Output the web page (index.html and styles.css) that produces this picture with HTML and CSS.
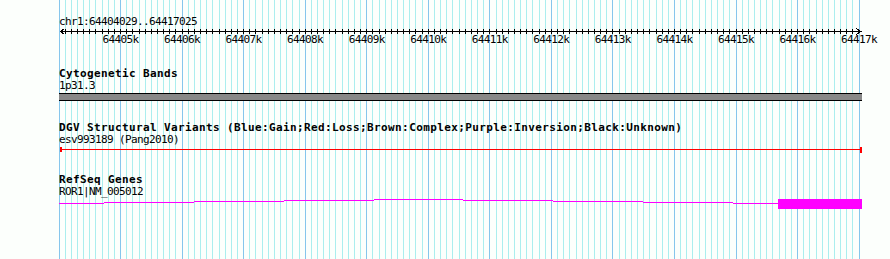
FILE: index.html
```html
<!DOCTYPE html>
<html>
<head>
<meta charset="utf-8">
<link rel="stylesheet" href="styles.css">
</head>
<body>
<div class="view">
  <svg class="grid" width="803" height="259" viewBox="0 0 803 259">
    <path class="grid-light" d="M6.5,0v259M12.5,0v259M18.5,0v259M24.5,0v259M30.5,0v259M36.5,0v259M43.5,0v259M49.5,0v259M55.5,0v259M67.5,0v259M73.5,0v259M80.5,0v259M86.5,0v259M92.5,0v259M98.5,0v259M104.5,0v259M110.5,0v259M116.5,0v259M129.5,0v259M135.5,0v259M141.5,0v259M147.5,0v259M153.5,0v259M160.5,0v259M166.5,0v259M172.5,0v259M178.5,0v259M190.5,0v259M196.5,0v259M203.5,0v259M209.5,0v259M215.5,0v259M221.5,0v259M227.5,0v259M233.5,0v259M240.5,0v259M252.5,0v259M258.5,0v259M264.5,0v259M270.5,0v259M276.5,0v259M283.5,0v259M289.5,0v259M295.5,0v259M301.5,0v259M313.5,0v259M320.5,0v259M326.5,0v259M332.5,0v259M338.5,0v259M344.5,0v259M350.5,0v259M356.5,0v259M363.5,0v259M375.5,0v259M381.5,0v259M387.5,0v259M393.5,0v259M400.5,0v259M406.5,0v259M412.5,0v259M418.5,0v259M424.5,0v259M437.5,0v259M443.5,0v259M449.5,0v259M455.5,0v259M461.5,0v259M467.5,0v259M473.5,0v259M480.5,0v259M486.5,0v259M498.5,0v259M504.5,0v259M510.5,0v259M517.5,0v259M523.5,0v259M529.5,0v259M535.5,0v259M541.5,0v259M547.5,0v259M560.5,0v259M566.5,0v259M572.5,0v259M578.5,0v259M584.5,0v259M590.5,0v259M597.5,0v259M603.5,0v259M609.5,0v259M621.5,0v259M627.5,0v259M633.5,0v259M640.5,0v259M646.5,0v259M652.5,0v259M658.5,0v259M664.5,0v259M670.5,0v259M683.5,0v259M689.5,0v259M695.5,0v259M701.5,0v259M707.5,0v259M713.5,0v259M720.5,0v259M726.5,0v259M732.5,0v259M744.5,0v259M750.5,0v259M757.5,0v259M763.5,0v259M769.5,0v259M775.5,0v259M781.5,0v259M787.5,0v259M793.5,0v259"/>
    <path class="grid-dark" d="M0.5,0v259M61.5,0v259M123.5,0v259M184.5,0v259M246.5,0v259M307.5,0v259M369.5,0v259M430.5,0v259M492.5,0v259M553.5,0v259M615.5,0v259M677.5,0v259M738.5,0v259M800.5,0v259"/>
  </svg>

  <div class="content">
    <div class="pos">chr1:64404029..64417025</div>

    <svg class="ruler" width="803" height="6" viewBox="0 0 803 6">
      <path class="ruler-line" d="M1,3.5H803"/>
      <path class="ruler-line" d="M5.5,0.5L1.5,3.5L5.5,6.5"/>
      <path class="ruler-line" d="M797.5,0.5L801.5,3.5L797.5,6.5"/>
      <path class="ruler-ticks" d="M6.5,1v5M12.5,1v5M18.5,1v5M24.5,1v5M30.5,1v5M36.5,1v5M43.5,1v5M49.5,1v5M55.5,1v5M61.5,1v5M67.5,1v5M73.5,1v5M80.5,1v5M86.5,1v5M92.5,1v5M98.5,1v5M104.5,1v5M110.5,1v5M116.5,1v5M123.5,1v5M129.5,1v5M135.5,1v5M141.5,1v5M147.5,1v5M153.5,1v5M160.5,1v5M166.5,1v5M172.5,1v5M178.5,1v5M184.5,1v5M190.5,1v5M196.5,1v5M203.5,1v5M209.5,1v5M215.5,1v5M221.5,1v5M227.5,1v5M233.5,1v5M240.5,1v5M246.5,1v5M252.5,1v5M258.5,1v5M264.5,1v5M270.5,1v5M276.5,1v5M283.5,1v5M289.5,1v5M295.5,1v5M301.5,1v5M307.5,1v5M313.5,1v5M320.5,1v5M326.5,1v5M332.5,1v5M338.5,1v5M344.5,1v5M350.5,1v5M356.5,1v5M363.5,1v5M369.5,1v5M375.5,1v5M381.5,1v5M387.5,1v5M393.5,1v5M400.5,1v5M406.5,1v5M412.5,1v5M418.5,1v5M424.5,1v5M430.5,1v5M437.5,1v5M443.5,1v5M449.5,1v5M455.5,1v5M461.5,1v5M467.5,1v5M473.5,1v5M480.5,1v5M486.5,1v5M492.5,1v5M498.5,1v5M504.5,1v5M510.5,1v5M517.5,1v5M523.5,1v5M529.5,1v5M535.5,1v5M541.5,1v5M547.5,1v5M553.5,1v5M560.5,1v5M566.5,1v5M572.5,1v5M578.5,1v5M584.5,1v5M590.5,1v5M597.5,1v5M603.5,1v5M609.5,1v5M615.5,1v5M621.5,1v5M627.5,1v5M633.5,1v5M640.5,1v5M646.5,1v5M652.5,1v5M658.5,1v5M664.5,1v5M670.5,1v5M677.5,1v5M683.5,1v5M689.5,1v5M695.5,1v5M701.5,1v5M707.5,1v5M713.5,1v5M720.5,1v5M726.5,1v5M732.5,1v5M738.5,1v5M744.5,1v5M750.5,1v5M757.5,1v5M763.5,1v5M769.5,1v5M775.5,1v5M781.5,1v5M787.5,1v5M793.5,1v5"/>
    </svg>

    <div class="ticklabels">
      <span>64405k</span><span>64406k</span><span>64407k</span><span>64408k</span><span>64409k</span><span>64410k</span><span>64411k</span><span>64412k</span><span>64413k</span><span>64414k</span><span>64415k</span><span>64416k</span><span>64417k</span>
    </div>

    <section class="track track-first">
      <div class="title">Cytogenetic Bands</div>
      <div class="label">1p31.3</div>
      <div class="band"></div>
    </section>

    <section class="track">
      <div class="title">DGV Structural Variants (Blue:Gain;Red:Loss;Brown:Complex;Purple:Inversion;Black:Unknown)</div>
      <div class="label">esv993189 (Pang2010)</div>
      <svg class="feature dgv" width="803" height="6" viewBox="0 0 803 6">
        <rect x="1" y="2" width="802" height="1"/>
        <rect x="1" y="0" width="2" height="5"/>
        <rect x="801" y="0" width="2" height="6"/>
      </svg>
    </section>

    <section class="track">
      <div class="title">RefSeq Genes</div>
      <div class="label">ROR1|NM_005012</div>
      <svg class="feature gene" width="803" height="10" viewBox="0 0 803 10">
        <rect x="0" y="4" width="45" height="1"/>
        <rect x="45" y="3" width="90" height="1"/>
        <rect x="135" y="2" width="90" height="1"/>
        <rect x="225" y="1" width="90" height="1"/>
        <rect x="315" y="0" width="89" height="1"/>
        <rect x="404" y="1" width="90" height="1"/>
        <rect x="494" y="2" width="90" height="1"/>
        <rect x="584" y="3" width="90" height="1"/>
        <rect x="674" y="4" width="45" height="1"/>
        <rect x="719" y="0" width="84" height="10"/>
      </svg>
    </section>
  </div>
</div>
</body>
</html>
```

FILE: styles.css
```css
html, body {
  margin: 0;
  padding: 0;
  background: #fcfffc;
}

.view {
  position: relative;
  width: 890px;
  height: 259px;
  overflow: hidden;
}

.grid {
  position: absolute;
  left: 59px;
  top: 0;
  shape-rendering: crispEdges;
}

.grid-light {
  stroke: #aaeeee;
  stroke-width: 1;
  fill: none;
}

.grid-dark {
  stroke: #86c6ec;
  stroke-width: 1;
  fill: none;
}

.content {
  position: relative;
  padding: 16px 0 0 59px;
}

.pos,
.label,
.ticklabels {
  font-family: "DejaVu Sans Mono", monospace;
  font-size: 11px;
  line-height: 12px;
  height: 12px;
  letter-spacing: -0.62px;
  color: #000;
  white-space: nowrap;
}

.title {
  font-family: "DejaVu Sans Mono", monospace;
  font-weight: bold;
  font-size: 11px;
  line-height: 12px;
  height: 12px;
  letter-spacing: 0.38px;
  color: #000;
  white-space: nowrap;
}

.ruler {
  display: block;
  overflow: visible;
  shape-rendering: crispEdges;
}

.ruler-line,
.ruler-ticks {
  stroke: #000;
  stroke-width: 1;
  fill: none;
}

.ticklabels {
  display: flex;
  margin-left: 30.7px;
}

.ticklabels span {
  flex: 0 0 61.55px;
  text-align: center;
}

.track {
  margin-top: 21px;
}

.track-first {
  margin-top: 22px;
}

.band {
  margin-top: 1px;
  width: 803px;
  height: 6px;
  background: #888888;
  border-top: 1px solid #000;
  border-bottom: 1px solid #000;
}

.feature {
  display: block;
  margin-top: 1px;
  shape-rendering: crispEdges;
}

.dgv rect {
  fill: #ff0000;
}

.gene rect {
  fill: #ff00ff;
}
```
